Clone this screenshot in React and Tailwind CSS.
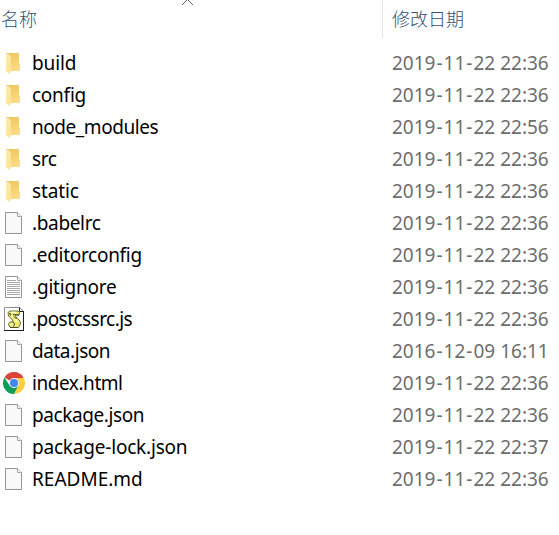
const files = [
  { name: 'build', icon: 'folder', date: '2019-11-22 22:36', tracking: 'tracking-[-0.1px]' },
  { name: 'config', icon: 'folder', date: '2019-11-22 22:36', tracking: 'tracking-[-0.25px]' },
  { name: 'node_modules', icon: 'folder', date: '2019-11-22 22:56', tracking: 'tracking-[-0.45px]' },
  { name: 'src', icon: 'folder', date: '2019-11-22 22:36', tracking: 'tracking-[-0.4px]' },
  { name: 'static', icon: 'folder', date: '2019-11-22 22:36', tracking: 'tracking-[-0.15px]' },
  { name: '.babelrc', icon: 'file', date: '2019-11-22 22:36', tracking: 'tracking-[-0.35px]' },
  { name: '.editorconfig', icon: 'file', date: '2019-11-22 22:36', tracking: 'tracking-[-0.3px]' },
  { name: '.gitignore', icon: 'text', date: '2019-11-22 22:36', tracking: 'tracking-[-0.2px]' },
  { name: '.postcssrc.js', icon: 'script', date: '2019-11-22 22:36', tracking: 'tracking-[-0.55px]' },
  { name: 'data.json', icon: 'file', date: '2016-12-09 16:11', tracking: 'tracking-[-0.45px]' },
  { name: 'index.html', icon: 'chrome', date: '2019-11-22 22:36', tracking: 'tracking-[-0.45px]' },
  { name: 'package.json', icon: 'file', date: '2019-11-22 22:36', tracking: 'tracking-[-0.4px]' },
  { name: 'package-lock.json', icon: 'file', date: '2019-11-22 22:37', tracking: 'tracking-[-0.2px]' },
  { name: 'README.md', icon: 'file', date: '2019-11-22 22:36', tracking: 'tracking-normal' },
];

function FolderIcon() {
  return (
    <>
      <defs>
        <linearGradient id="folderBack" gradientUnits="userSpaceOnUse" x1="9" y1="8" x2="20" y2="24">
          <stop offset="0" stopColor="#ebc863" />
          <stop offset="1" stopColor="#ffe087" />
        </linearGradient>
        <linearGradient id="folderFront" x1="0" y1="0" x2="1" y2="1">
          <stop offset="0" stopColor="#ffedb4" />
          <stop offset="1" stopColor="#fde092" />
        </linearGradient>
      </defs>
      <path d="M6 6h13v11h1v6.500l-1 .5H6z" fill="url(#folderBack)" />
      <path d="M6 6l4 2.500 1 2V24l-1.200 3L6 24z" fill="url(#folderFront)" />
    </>
  );
}

function FileIcon({ lined = false }) {
  return (
    <>
      <path d="M5.5 5.5h12l4 4v17h-16z" fill={lined ? '#fff' : '#f8f9fa'} stroke="#939393" />
      <path d="M17.5 5.5v4h4" fill="#fff" stroke="#a3a3a3" />
      {lined && (
        <path
          d="M7 9.5h9M7 11.5h13M7 13.5h13M7 15.5h13M7 17.5h13M7 19.5h13M7 21.5h13M7 23.5h13"
          stroke="#a9a9a9"
          fill="none"
        />
      )}
    </>
  );
}

function ScriptIcon() {
  return (
    <>
      <path d="M4.5 4.5h15l4 4v19h-19z" fill="#fff" stroke="#8e8e8e" />
      <path d="M4 27.5h20M23.5 8v20M19.5 4.5v4h4" fill="none" stroke="#1e1e1e" />
      <path
        d="M8 9.500L10 8h8l1.500 1.500-.5 2.500h-4l1 2 4 4 .5 3-2 3.500h-7.500l-2-1.500-.5-2.500 1.500-1.500H13l-.5-2-4-4z"
        fill="#f0ea6c"
        stroke="#6f6d3c"
      />
      <path d="M11 9.500h5M10.500 12l2 2M14.500 16l3 3M11 21.500h3" stroke="#fffcc8" strokeWidth="1.500" />
      <path d="M13 11.500l6 .5M14 13.500l2.500 2.500M13 19l1.500 2-1 2.500M9 10.500l2 .5-1 2M10 24.500h8" stroke="#4a482c" fill="none" />
    </>
  );
}

function ChromeIcon() {
  return (
    <>
      <path d="M14 16L4.470 10.500A11 11 0 0 1 23.530 10.500z" fill="#db4437" />
      <path d="M14 11h9.800A11 11 0 0 1 14 27l4.330-8.500z" fill="#ffcd40" />
      <path d="M4.470 10.500L9.670 18.500 14 21l4.330-2.500L14 27A11 11 0 0 1 4.470 10.500z" fill="#0f9d58" />
      <circle cx="14" cy="16" r="5" fill="#f1f1f1" />
      <circle cx="14" cy="16" r="4" fill="#4285f4" />
    </>
  );
}

function Icon({ type }) {
  return (
    <svg className="h-8 w-8 shrink-0" viewBox="0 0 32 32">
      {type === 'folder' && <FolderIcon />}
      {type === 'file' && <FileIcon />}
      {type === 'text' && <FileIcon lined />}
      {type === 'script' && <ScriptIcon />}
      {type === 'chrome' && <ChromeIcon />}
    </svg>
  );
}

function Timestamp({ value }) {
  const [year, month, rest] = value.split('-');
  return (
    <time className="whitespace-nowrap text-[#6d6d6d]">
      {year}
      <span className="px-px">-</span>
      {month}
      <span className="px-px">-</span>
      {rest}
    </time>
  );
}

export default function App() {
  return (
    <main className="h-[535px] w-[559px] overflow-hidden bg-white font-['Noto_Sans','Noto_Sans_CJK_SC',sans-serif] text-[19px] text-black">
      <header className="flex h-[38px] font-['Noto_Sans_CJK_SC',sans-serif] text-[18px] font-light leading-[36px] text-[#34506f]">
        <div className="flex w-[383px] items-start border-r border-[#e5e5e5] pl-px">
          <span className="w-[180px]">名称</span>
          <svg className="h-[6px] w-[13px]" viewBox="0 0 13 6">
            <path d="M1 5l5.500-5.500L12 5" fill="none" stroke="#5c5c5c" />
          </svg>
        </div>
        <span className="pl-[9px]">修改日期</span>
      </header>
      <ul className="pt-[9px]">
        {files.map((file) => (
          <li key={file.name} className="flex h-8 items-center leading-8">
            <div className="flex w-[392px]">
              <Icon type={file.icon} />
              <span className={file.tracking}>{file.name}</span>
            </div>
            <Timestamp value={file.date} />
          </li>
        ))}
      </ul>
    </main>
  );
}
